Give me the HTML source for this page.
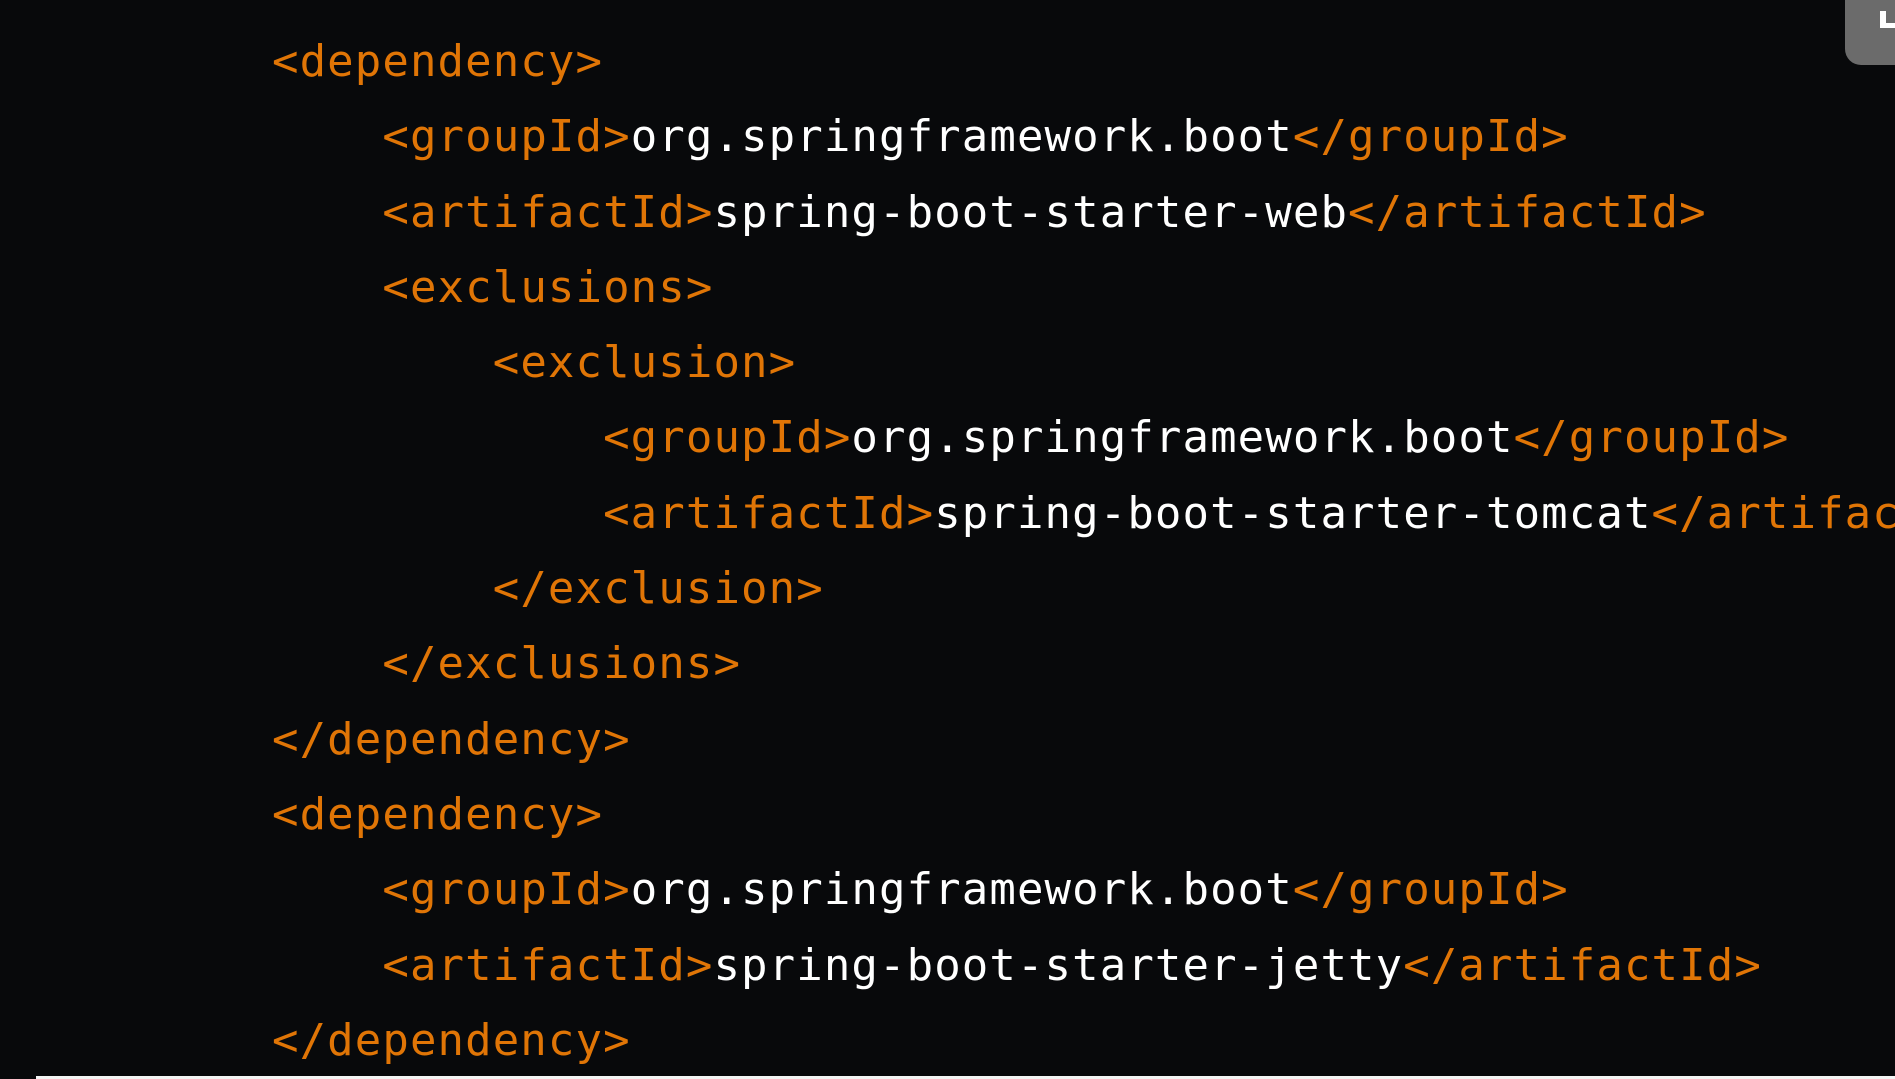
<!DOCTYPE html>
<html><head><meta charset="utf-8"><style>
html,body{margin:0;padding:0;background:#08090b;width:1895px;height:1079px;overflow:hidden;position:relative}
.wrap{position:absolute;left:0;top:0;width:1895px;height:1079px;overflow:hidden}
pre{position:absolute;left:272px;top:24px;margin:0;font-family:"DejaVu Sans Mono",monospace;font-size:44px;letter-spacing:1.1px;line-height:75.3px;color:#ffffff}
.t{color:#e07506}
.btn{position:absolute;left:1845px;top:0;width:50px;height:65px;background:#6b6b6b;border-bottom-left-radius:16px;overflow:hidden}
.btn i{position:absolute;left:35px;top:11px;width:6px;height:17px;background:#fff}
.btn b{position:absolute;left:35px;top:23px;width:15px;height:5px;background:#fff}
.bar{position:absolute;left:36px;top:1076px;width:1859px;height:3px;background:#f4f4f4}
</style></head><body>
<div class="wrap">
<pre><span class="t">&lt;dependency&gt;</span>
    <span class="t">&lt;groupId&gt;</span>org.springframework.boot<span class="t">&lt;/groupId&gt;</span>
    <span class="t">&lt;artifactId&gt;</span>spring-boot-starter-web<span class="t">&lt;/artifactId&gt;</span>
    <span class="t">&lt;exclusions&gt;</span>
        <span class="t">&lt;exclusion&gt;</span>
            <span class="t">&lt;groupId&gt;</span>org.springframework.boot<span class="t">&lt;/groupId&gt;</span>
            <span class="t">&lt;artifactId&gt;</span>spring-boot-starter-tomcat<span class="t">&lt;/artifactId&gt;</span>
        <span class="t">&lt;/exclusion&gt;</span>
    <span class="t">&lt;/exclusions&gt;</span>
<span class="t">&lt;/dependency&gt;</span>
<span class="t">&lt;dependency&gt;</span>
    <span class="t">&lt;groupId&gt;</span>org.springframework.boot<span class="t">&lt;/groupId&gt;</span>
    <span class="t">&lt;artifactId&gt;</span>spring-boot-starter-jetty<span class="t">&lt;/artifactId&gt;</span>
<span class="t">&lt;/dependency&gt;</span></pre>
<div class="btn"><i></i><b></b></div>
<div class="bar"></div>
</div>
</body></html>
